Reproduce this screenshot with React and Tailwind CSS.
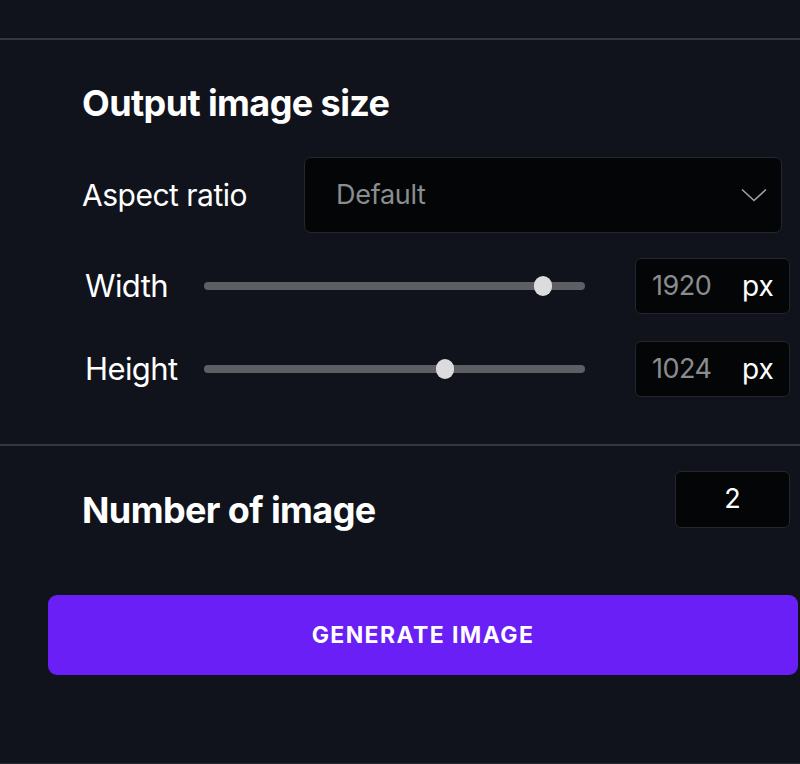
import React from "react";

const font = { fontFamily: "Inter, 'Noto Sans', sans-serif" };

const Slider = ({ pct }) => (
  <div className="relative h-2 w-[381px] rounded-full bg-[#5d5f64]">
    <div
      className="absolute top-1/2 h-[20px] w-[18px] -translate-x-1/2 -translate-y-1/2 rounded-full bg-[#dcdcde]"
      style={{ left: `${pct}%` }}
    />
  </div>
);

const SizeRow = ({ label, value, pct }) => (
  <div className="flex h-[56px] items-center">
    <span className="w-[122px] pl-[3px] text-[31px] tracking-[-0.6px] text-white">{label}</span>
    <Slider pct={pct} />
    <div className="ml-[50px] flex h-[56px] w-[155px] items-center rounded-[6px] border border-[#24262c] bg-[#040507] pl-[16px]">
      <span className="w-[90px] text-[27px] tracking-[-0.5px] text-[#8b8c8f]">{value}</span>
      <span className="text-[28px] text-white">px</span>
    </div>
  </div>
);

export default function App() {
  return (
    <div className="h-[764px] w-[800px] overflow-hidden border-b border-[#26292f] bg-[#10131b]" style={font}>
      <div className="h-[40px] border-b-2 border-[#34373d]" />

      <div className="pl-[82px] pt-[45px]">
        <h2 className="text-[36px] font-bold leading-none tracking-[-0.6px] text-white">
          Output image size
        </h2>

        <div className="mt-[36px] flex items-center">
          <span className="w-[222px] text-[30px] tracking-[-0.5px] text-white">Aspect ratio</span>
          <div className="flex h-[76px] w-[478px] items-center justify-between rounded-[7px] border border-[#25272d] bg-[#040507] pl-[31px] pr-[14px]">
            <span className="text-[27px] tracking-[-0.3px] text-[#8b8c8f]">Default</span>
            <svg width="26" height="14" viewBox="0 0 26 14" fill="none">
              <path d="M1 1.5 L13 12.5 L25 1.5" stroke="#a0a1a4" strokeWidth="1.6" />
            </svg>
          </div>
        </div>

        <div className="mt-[25px] flex flex-col gap-[27px]">
          <SizeRow label="Width" value="1920" pct={89} />
          <SizeRow label="Height" value="1024" pct={63.2} />
        </div>
      </div>

      <div className="mt-[47px] border-t-2 border-[#34373d]" />

      <div className="mt-[25px] flex h-[57px] items-center justify-between pl-[82px] pr-[10px]">
        <span className="mt-[20px] text-[36px] font-bold leading-none tracking-[-0.6px] text-white">
          Number of image
        </span>
        <div className="flex h-[57px] w-[115px] items-center justify-center rounded-[6px] border border-[#25272d] bg-[#040507] text-[27px] text-white">
          2
        </div>
      </div>

      <div className="mt-[67px] pl-[48px] pr-[2px]">
        <button className="flex h-[80px] w-full items-center justify-center rounded-[9px] bg-[#6a1ff7] text-[23px] font-bold tracking-[1.4px] text-white">
          GENERATE IMAGE
        </button>
      </div>
    </div>
  );
}
